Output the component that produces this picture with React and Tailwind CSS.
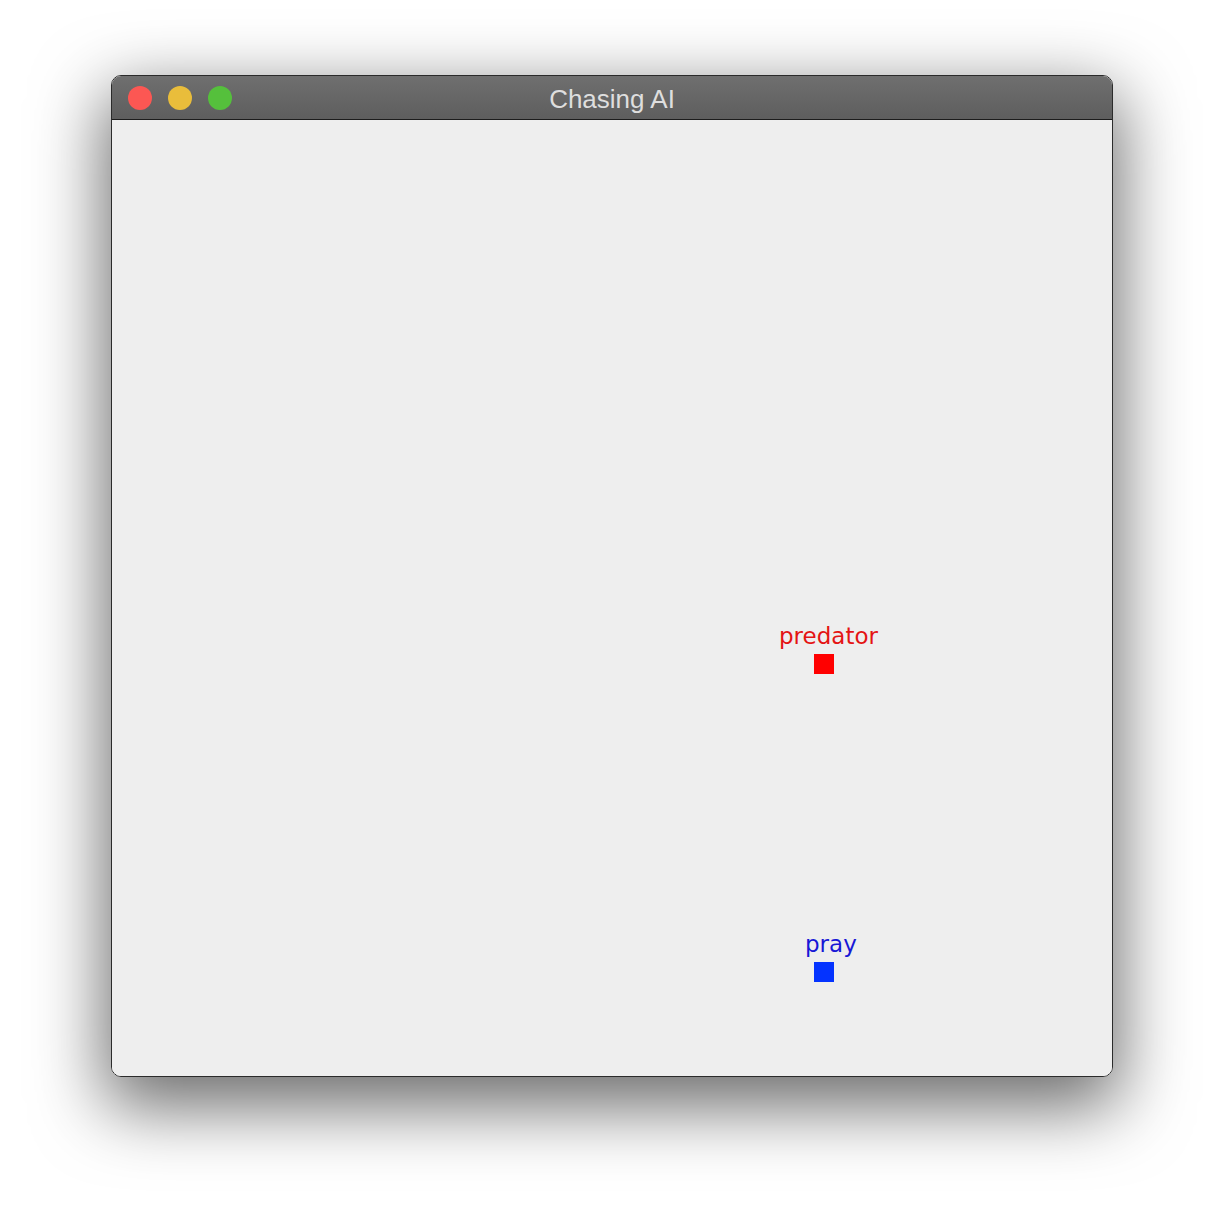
import React from 'react';

const sprites = [
  { name: 'predator', x: 702, y: 534, labelX: 667, labelY: 505, box: 'bg-[#ff0000]', text: 'text-[#e41414]' },
  { name: 'pray', x: 702, y: 842, labelX: 693, labelY: 813, box: 'bg-[#0433ff]', text: 'text-[#1818d6]' },
];

const TrafficLights = () => (
  <div className="flex items-center gap-4 pl-[16px]">
    <span className="w-6 h-6 rounded-full bg-[#fc5753]" />
    <span className="w-6 h-6 rounded-full bg-[#e9bd3b]" />
    <span className="w-6 h-6 rounded-full bg-[#55c03c]" />
  </div>
);

export default function App() {
  return (
    <div className="w-[1224px] h-[1224px] bg-white pl-[111px] pt-[75px]">
      <div className="w-[1002px] h-[1002px] flex flex-col border border-[#2b2b2b] rounded-[10px] overflow-hidden shadow-[0_24px_70px_6px_rgba(0,0,0,0.58)]">
        <div className="relative h-[44px] shrink-0 flex items-center bg-gradient-to-b from-[#6f6f6f] to-[#5e5e5e] border-b border-[#1c1c1c]">
          <TrafficLights />
          <div className="absolute inset-0 pt-[3px] flex items-center justify-center text-[26px] text-[#dedede] font-['Liberation_Sans',Arial,sans-serif]">
            Chasing AI
          </div>
        </div>
        <div className="relative flex-1 bg-[#eeeeee]">
          {sprites.map((s) => (
            <React.Fragment key={s.name}>
              <div
                className={`absolute text-[23px] leading-none whitespace-nowrap font-['DejaVu_Sans',sans-serif] ${s.text}`}
                style={{ left: s.labelX, top: s.labelY }}
              >
                {s.name}
              </div>
              <div className={`absolute w-5 h-5 ${s.box}`} style={{ left: s.x, top: s.y }} />
            </React.Fragment>
          ))}
        </div>
      </div>
    </div>
  );
}
